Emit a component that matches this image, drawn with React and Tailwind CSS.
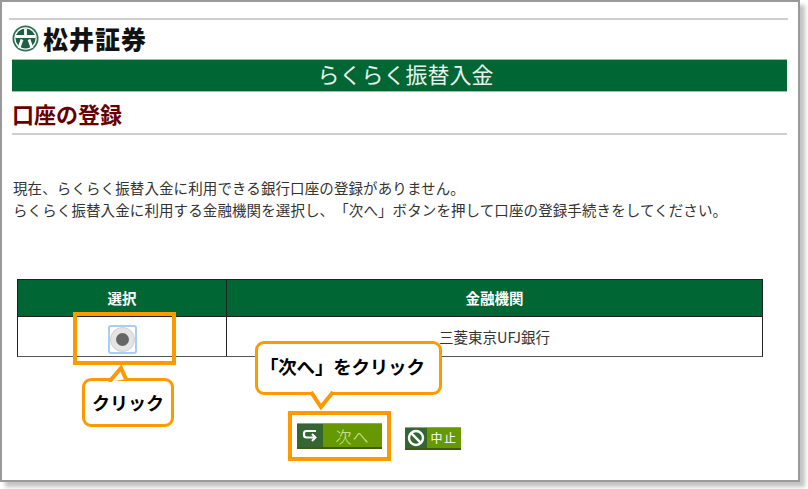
const jp = "font-['Noto_Sans_CJK_JP','Liberation_Sans',sans-serif]";

function Logo() {
  return (
    <svg width="27" height="27" viewBox="0 0 27 27" className="shrink-0">
      <circle cx="13.5" cy="13.5" r="13" fill="#2f6f55" />
      <circle cx="13.5" cy="13.5" r="11.2" fill="#fff" />
      <circle cx="13.5" cy="13.5" r="10" fill="#1f5f45" />
      <path d="M13.5 3.5v7M3.5 11.5h20M10 14.5L7 23M17 14.5L20 23" stroke="#fff" strokeWidth="2.8" fill="none" />
    </svg>
  );
}

function Tail({ className, w, h, d }) {
  return (
    <svg width={w} height={h} viewBox={`0 0 ${w} ${h}`} className={`absolute ${className}`}>
      <path d={d} fill="#fff" stroke="#ff9900" strokeWidth="4" strokeLinejoin="miter" />
    </svg>
  );
}

export default function App() {
  return (
    <div className={`w-[808px] h-[489px] bg-white relative overflow-hidden [text-spacing-trim:space-all] ${jp}`}>
      <div className="w-[800px] h-[482px] bg-white border-2 border-[#9a9a9a] shadow-[5px_5px_4px_#c4c4c4] pt-[16px] pl-[7px] pr-[10px]">
        <div className="h-[2px] bg-[#cfcfcf] w-[779px]" />
        <div className="flex flex-col pl-[3px] w-[778px]">
          <div className="flex items-center gap-[4px] h-[39px] pb-[3px]">
            <Logo />
            <span className="text-[25px] font-black text-[#111] leading-none tracking-[1px]">松井証券</span>
          </div>
          <div className="h-[33px] bg-[#006633] text-[22px] leading-[27px] text-center border-y border-[#9cbfa9] text-[#e8f2ec] pl-[12px]">らくらく振替入金</div>
          <div className="h-[43px] pt-[5px] text-[22px] font-bold leading-[33px] text-[#660000] border-b-2 border-[#cfcfcf]">口座の登録</div>
          <div className="mt-[42px] text-[14.5px] leading-[22px] text-[#333] h-[102px] pl-[1px] tracking-[0.1px]">
            <p>現在、らくらく振替入金に利用できる銀行口座の登録がありません。</p>
            <p>らくらく振替入金に利用する金融機関を選択し、「次へ」ボタンを押して口座の登録手続きをしてください。</p>
          </div>
          <div className="ml-[5px] w-[746px] border border-[#222] border-b-[#555]">
            <div className="flex h-[37px] bg-[#006633] text-white text-[14.5px] font-bold items-center border-b border-[#222]">
              <div className="w-[209px] h-full flex items-center justify-center border-r border-[#222]">選択</div>
              <div className="flex-1 text-center font-bold">金融機関</div>
            </div>
            <div className="flex h-[39px] text-[14.5px] text-[#333] items-center">
              <div className="w-[209px] h-full flex items-center justify-center border-r border-[#222]">
                <div className="w-[29px] h-[29px] mt-[6px] ml-[1px] rounded-[3px] border-2 border-[#a9cdf5] flex items-center justify-center">
                  <div className="w-[25px] h-[25px] rounded-full bg-[#e4e4e4] border border-[#cfcfcf] flex items-center justify-center">
                    <div className="w-[13px] h-[13px] rounded-full bg-[#666]" />
                  </div>
                </div>
              </div>
              <div className="flex-1 text-center">三菱東京UFJ銀行</div>
            </div>
          </div>
          <div className="flex items-start pt-[66px] pl-[285px] gap-[23px]">
            <div className="w-[85px] h-[26px] bg-[#669900] border-t border-[#8fb040] border-b-2 border-b-[#3f5a12] flex items-center text-[#d8e8b0] text-[16px] font-light">
              <div className="w-[26px] h-full bg-[#336633] flex items-center justify-center shrink-0">
                <svg width="16" height="14" viewBox="0 0 16 14" fill="none" stroke="#fff" strokeWidth="2.2">
                  <path d="M14 2H4.5Q2 2 2 4.5V6Q2 8.5 4.5 8.5H13.5" />
                  <path d="M10 5L13.5 8.5 10 12" strokeWidth="2" />
                </svg>
              </div>
              <span className="flex-1 text-center tracking-[1px]">次へ</span>
            </div>
            <div className="w-[56px] h-[23px] mt-[4px] bg-[#669900] border-t border-[#8fb040] border-b-2 border-b-[#3f5a12] flex items-center text-white text-[12px]">
              <div className="w-[22px] h-full bg-[#336633] flex items-center justify-center shrink-0">
                <svg width="18" height="18" viewBox="0 0 18 18" fill="none" stroke="#fff" strokeWidth="2.4">
                  <circle cx="9" cy="9" r="7" />
                  <path d="M4.2 4.2L13.8 13.8" />
                </svg>
              </div>
              <span className="flex-1 text-center tracking-[1.5px]">中止</span>
            </div>
          </div>
        </div>
      </div>

      <div className="absolute left-[73px] top-[312px] w-[103px] h-[53px] border-[4px] border-[#ff9900]" />
      <div className="absolute left-[288px] top-[411px] w-[103px] h-[50px] border-[4px] border-[#ff9900]" />

      <div className="absolute left-[82px] top-[378px] w-[92px] h-[49px] bg-white border-[3.5px] border-[#ff9900] rounded-[9px] flex items-center justify-center text-[18px] font-bold text-black">
        クリック
        <Tail className="left-[21px] top-[-16px]" w={30} h={17} d="M3 17 L15 3 L20 14" />
      </div>
      <div className="absolute left-[255px] top-[341px] w-[187px] h-[54px] bg-white border-[3.5px] border-[#ff9900] rounded-[9px] flex items-center pl-[2px] pb-[3px] text-[18.5px] font-bold text-black tracking-[-0.2px]">
        「次へ」をクリック
        <Tail className="left-[50px] top-[47px]" w={30} h={20} d="M3 1 L13 16 L25 1" />
      </div>
    </div>
  );
}
